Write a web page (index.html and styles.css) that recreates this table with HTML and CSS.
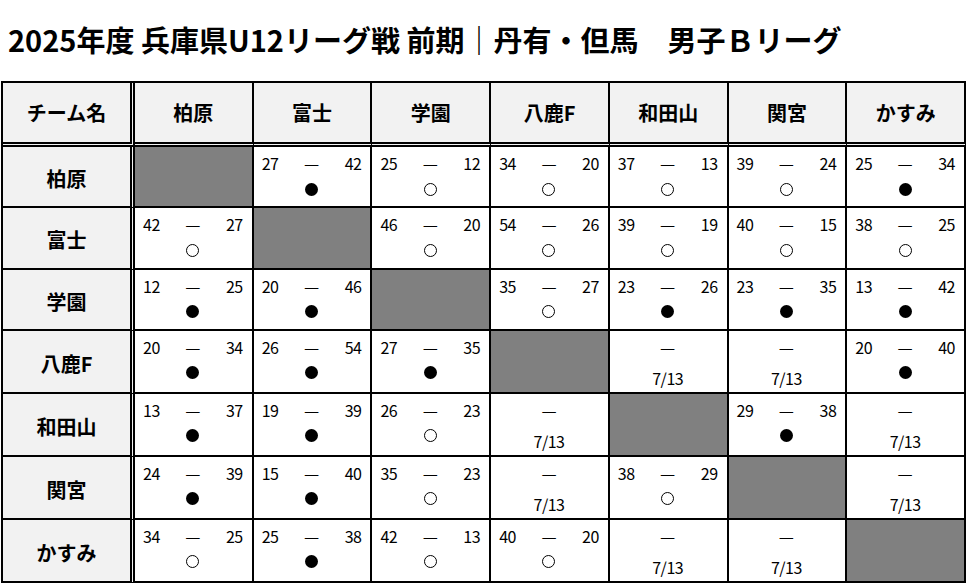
FILE: index.html
```html
<!DOCTYPE html>
<html lang="ja">
<head>
<meta charset="utf-8">
<title>2025年度 兵庫県U12リーグ戦 前期</title>
<link rel="stylesheet" href="styles.css">
</head>
<body>
<h1 class="title">2025年度 兵庫県U12リーグ戦 前期｜丹有・但馬　男子Ｂリーグ</h1>
<div class="league">
  <div class="hd corner">チーム名</div>
  <div class="hd">柏原</div>
  <div class="hd">富士</div>
  <div class="hd">学園</div>
  <div class="hd">八鹿F</div>
  <div class="hd">和田山</div>
  <div class="hd">関宮</div>
  <div class="hd">かすみ</div>

  <div class="rh">柏原</div>
  <div class="cell self"></div>
  <div class="cell"><div class="sc"><span>27</span><span class="dash">—</span><span>42</span></div><div class="res"><i class="lose"></i></div></div>
  <div class="cell"><div class="sc"><span>25</span><span class="dash">—</span><span>12</span></div><div class="res"><i class="win"></i></div></div>
  <div class="cell"><div class="sc"><span>34</span><span class="dash">—</span><span>20</span></div><div class="res"><i class="win"></i></div></div>
  <div class="cell"><div class="sc"><span>37</span><span class="dash">—</span><span>13</span></div><div class="res"><i class="win"></i></div></div>
  <div class="cell"><div class="sc"><span>39</span><span class="dash">—</span><span>24</span></div><div class="res"><i class="win"></i></div></div>
  <div class="cell"><div class="sc"><span>25</span><span class="dash">—</span><span>34</span></div><div class="res"><i class="lose"></i></div></div>

  <div class="rh">富士</div>
  <div class="cell"><div class="sc"><span>42</span><span class="dash">—</span><span>27</span></div><div class="res"><i class="win"></i></div></div>
  <div class="cell self"></div>
  <div class="cell"><div class="sc"><span>46</span><span class="dash">—</span><span>20</span></div><div class="res"><i class="win"></i></div></div>
  <div class="cell"><div class="sc"><span>54</span><span class="dash">—</span><span>26</span></div><div class="res"><i class="win"></i></div></div>
  <div class="cell"><div class="sc"><span>39</span><span class="dash">—</span><span>19</span></div><div class="res"><i class="win"></i></div></div>
  <div class="cell"><div class="sc"><span>40</span><span class="dash">—</span><span>15</span></div><div class="res"><i class="win"></i></div></div>
  <div class="cell"><div class="sc"><span>38</span><span class="dash">—</span><span>25</span></div><div class="res"><i class="win"></i></div></div>

  <div class="rh">学園</div>
  <div class="cell"><div class="sc"><span>12</span><span class="dash">—</span><span>25</span></div><div class="res"><i class="lose"></i></div></div>
  <div class="cell"><div class="sc"><span>20</span><span class="dash">—</span><span>46</span></div><div class="res"><i class="lose"></i></div></div>
  <div class="cell self"></div>
  <div class="cell"><div class="sc"><span>35</span><span class="dash">—</span><span>27</span></div><div class="res"><i class="win"></i></div></div>
  <div class="cell"><div class="sc"><span>23</span><span class="dash">—</span><span>26</span></div><div class="res"><i class="lose"></i></div></div>
  <div class="cell"><div class="sc"><span>23</span><span class="dash">—</span><span>35</span></div><div class="res"><i class="lose"></i></div></div>
  <div class="cell"><div class="sc"><span>13</span><span class="dash">—</span><span>42</span></div><div class="res"><i class="lose"></i></div></div>

  <div class="rh">八鹿F</div>
  <div class="cell"><div class="sc"><span>20</span><span class="dash">—</span><span>34</span></div><div class="res"><i class="lose"></i></div></div>
  <div class="cell"><div class="sc"><span>26</span><span class="dash">—</span><span>54</span></div><div class="res"><i class="lose"></i></div></div>
  <div class="cell"><div class="sc"><span>27</span><span class="dash">—</span><span>35</span></div><div class="res"><i class="lose"></i></div></div>
  <div class="cell self"></div>
  <div class="cell"><div class="sc pend"><span class="dash">—</span></div><div class="res date">7/13</div></div>
  <div class="cell"><div class="sc pend"><span class="dash">—</span></div><div class="res date">7/13</div></div>
  <div class="cell"><div class="sc"><span>20</span><span class="dash">—</span><span>40</span></div><div class="res"><i class="lose"></i></div></div>

  <div class="rh">和田山</div>
  <div class="cell"><div class="sc"><span>13</span><span class="dash">—</span><span>37</span></div><div class="res"><i class="lose"></i></div></div>
  <div class="cell"><div class="sc"><span>19</span><span class="dash">—</span><span>39</span></div><div class="res"><i class="lose"></i></div></div>
  <div class="cell"><div class="sc"><span>26</span><span class="dash">—</span><span>23</span></div><div class="res"><i class="win"></i></div></div>
  <div class="cell"><div class="sc pend"><span class="dash">—</span></div><div class="res date">7/13</div></div>
  <div class="cell self"></div>
  <div class="cell"><div class="sc"><span>29</span><span class="dash">—</span><span>38</span></div><div class="res"><i class="lose"></i></div></div>
  <div class="cell"><div class="sc pend"><span class="dash">—</span></div><div class="res date">7/13</div></div>

  <div class="rh">関宮</div>
  <div class="cell"><div class="sc"><span>24</span><span class="dash">—</span><span>39</span></div><div class="res"><i class="lose"></i></div></div>
  <div class="cell"><div class="sc"><span>15</span><span class="dash">—</span><span>40</span></div><div class="res"><i class="lose"></i></div></div>
  <div class="cell"><div class="sc"><span>35</span><span class="dash">—</span><span>23</span></div><div class="res"><i class="win"></i></div></div>
  <div class="cell"><div class="sc pend"><span class="dash">—</span></div><div class="res date">7/13</div></div>
  <div class="cell"><div class="sc"><span>38</span><span class="dash">—</span><span>29</span></div><div class="res"><i class="win"></i></div></div>
  <div class="cell self"></div>
  <div class="cell"><div class="sc pend"><span class="dash">—</span></div><div class="res date">7/13</div></div>

  <div class="rh">かすみ</div>
  <div class="cell"><div class="sc"><span>34</span><span class="dash">—</span><span>25</span></div><div class="res"><i class="win"></i></div></div>
  <div class="cell"><div class="sc"><span>25</span><span class="dash">—</span><span>38</span></div><div class="res"><i class="lose"></i></div></div>
  <div class="cell"><div class="sc"><span>42</span><span class="dash">—</span><span>13</span></div><div class="res"><i class="win"></i></div></div>
  <div class="cell"><div class="sc"><span>40</span><span class="dash">—</span><span>20</span></div><div class="res"><i class="win"></i></div></div>
  <div class="cell"><div class="sc pend"><span class="dash">—</span></div><div class="res date">7/13</div></div>
  <div class="cell"><div class="sc pend"><span class="dash">—</span></div><div class="res date">7/13</div></div>
  <div class="cell self"></div>
</div>
</body>
</html>
```
FILE: styles.css
```css
html, body {
  margin: 0;
  padding: 0;
  background: #ffffff;
}
body {
  font-family: "Noto Sans CJK JP", "Noto Sans", sans-serif;
  color: #000;
  width: 966px;
  height: 583px;
  overflow: hidden;
}
.title {
  margin: 0;
  box-sizing: border-box;
  height: 81px;
  padding: 19px 0 0 8px;
  font-size: 29px;
  font-weight: 700;
  line-height: 40px;
  white-space: nowrap;
}
.league {
  margin-left: 1px;
  width: 965px;
  height: 502px;
  box-sizing: border-box;
  border-top: 2px solid #000;
  border-left: 2px solid #000;
  display: grid;
  grid-template-columns: 132px repeat(7, 1fr);
  grid-template-rows: 64px repeat(7, 1fr);
}
.league > div {
  box-sizing: border-box;
  border-right: 2px solid #000;
  border-bottom: 2px solid #000;
  min-width: 0;
}
.hd {
  background: #f2f2f2;
  display: flex;
  align-items: center;
  justify-content: center;
  font-size: 20px;
  font-weight: 700;
  border-bottom: 5px double #000 !important;
}
.league > .corner,
.league > .rh {
  border-right: 5px double #000;
}
.rh {
  background: #f2f2f2;
  display: flex;
  align-items: center;
  justify-content: center;
  font-size: 20px;
  font-weight: 700;
  padding-top: 4px;
}
.cell {
  background: #fff;
  padding: 4px 9px 0 8px;
  font-size: 16px;
  letter-spacing: -0.5px;
}
.self {
  background: #808080;
}
.sc {
  display: flex;
  justify-content: space-between;
  height: 24px;
  line-height: 24px;
}
.sc.pend {
  justify-content: center;
}
.dash {
  font-size: 17px;
  letter-spacing: 0;
}
.res {
  height: 28px;
  display: flex;
  align-items: center;
  justify-content: center;
  line-height: 28px;
}
.res.date {
  padding-top: 5px;
  box-sizing: border-box;
  height: 33px;
}
.res i {
  display: block;
  width: 13px;
  height: 13px;
  border-radius: 50%;
  box-sizing: border-box;
}
.res i.lose {
  background: #000;
}
.res i.win {
  border: 1px solid #000;
  background: #fff;
}
```
